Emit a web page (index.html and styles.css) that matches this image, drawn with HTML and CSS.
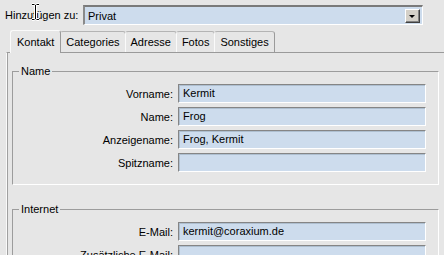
FILE: index.html
```html
<!DOCTYPE html>
<html lang="de">

<head>
    <meta charset="UTF-8">
    <title>Kontakt bearbeiten</title>
    <link rel="stylesheet" href="styles.css">
</head>

<body>
    <div class="topbar">
        <label class="top-label">Hinzufügen zu:</label>
        <div class="combo">
            <span class="combo-text">Privat</span>
            <span class="combo-btn"><span class="arrow"></span></span>
        </div>
    </div>

    <div class="tabs">
        <div class="tab active">Kontakt</div>
        <div class="tab">Categories</div>
        <div class="tab">Adresse</div>
        <div class="tab">Fotos</div>
        <div class="tab">Sonstiges</div>
    </div>

    <div class="pane">
        <fieldset class="group">
            <legend>Name</legend>
            <div class="row"><label>Vorname:</label><div class="field">Kermit</div></div>
            <div class="row"><label>Name:</label><div class="field">Frog</div></div>
            <div class="row"><label>Anzeigename:</label><div class="field">Frog, Kermit</div></div>
            <div class="row"><label>Spitzname:</label><div class="field"></div></div>
        </fieldset>

        <fieldset class="group">
            <legend>Internet</legend>
            <div class="row"><label>E-Mail:</label><div class="field">kermit@coraxium.de</div></div>
            <div class="row"><label>Zusätzliche E-Mail:</label><div class="field"></div></div>
        </fieldset>
    </div>

    <svg class="ibeam" width="9" height="18" viewBox="0 0 9 18">
        <path d="M1 1.5h2.5M5.5 1.5H8M4.5 2v14M1 16.5h2.5M5.5 16.5H8" stroke="#fff" stroke-width="3" fill="none"/>
        <path d="M1 1.5h2.5M5.5 1.5H8M4.5 2v14M1 16.5h2.5M5.5 16.5H8" stroke="#000" stroke-width="1" fill="none"/>
    </svg>
</body>

</html>
```

FILE: styles.css
```css
body {
    margin: 0;
    background: #e6e6e6;
    font-family: 'Liberation Sans', Arial, sans-serif;
    font-size: 11px;
    color: #000;
    overflow: hidden;
    position: relative;
}

.topbar {
    display: flex;
    align-items: center;
    padding: 5px 0 0 5px;
}

.top-label {
    width: 78px;
}

.combo {
    width: 337px;
    height: 15px;
    display: flex;
    align-items: center;
    justify-content: space-between;
    background: #cddced;
    border-top: 2px solid #7a7a7a;
    border-left: 2px solid #8a8a8a;
    border-bottom: 1px solid #fff;
    border-right: 1px solid #fff;
    padding: 1px 0;
}

.combo-text {
    padding-left: 3px;
}

.combo-btn {
    width: 13px;
    height: 12px;
    margin-right: 2px;
    background: #d4d0c8;
    border-top: 1px solid #fff;
    border-left: 1px solid #fff;
    border-right: 1px solid #404040;
    border-bottom: 1px solid #404040;
    box-shadow: inset -1px -1px 0 #808080;
    display: flex;
    align-items: center;
    justify-content: center;
}

.arrow {
    width: 0;
    height: 0;
    border-left: 3px solid transparent;
    border-right: 3px solid transparent;
    border-top: 3px solid #000;
    margin: 1px 1px 0 0;
}

.tabs {
    display: flex;
    align-items: flex-end;
    margin: 4px 0 0 10px;
    height: 23px;
}

.tab {
    height: 20px;
    line-height: 20px;
    padding: 0 5px;
    border-top: 1px solid #b4b4b4;
    border-right: 1px solid #9a9a9a;
    border-left: 1px solid #fafafa;
    border-radius: 3px 3px 0 0;
    margin-left: -1px;
}

.tab.active {
    height: 22px;
    line-height: 22px;
    margin-left: 0;
    padding: 0 6px;
    position: relative;
    z-index: 1;
    background: #e6e6e6;
    border-top-color: #fafafa;
    margin-bottom: -1px;
}

.pane {
    margin-left: 6px;
    width: 470px;
    border-top: 1px solid #9a9a9a;
    border-left: 1px solid #fafafa;
    box-shadow: inset 1px 0 0 #a0a0a0;
    padding: 12px 0 0 5px;
    height: 220px;
}

.group {
    width: 425px;
    margin: 0 0 18px 0;
    padding: 7px 0 8px 0;
    border-top: 1px solid #9c9c9c;
    border-left: 1px solid #9c9c9c;
    border-right: 1px solid #fff;
    border-bottom: 1px solid #fff;
}

.group legend {
    padding: 0 2px;
    margin-left: 6px;
}

.row {
    display: grid;
    grid-template-columns: 160px 248px;
    column-gap: 5px;
    align-items: center;
    margin-bottom: 4px;
}

.row label {
    text-align: right;
}

.field {
    height: 17px;
    line-height: 17px;
    padding-left: 4px;
    background: #cddced;
    border-top: 1px solid #858585;
    border-left: 1px solid #858585;
    border-bottom: 1px solid #fff;
    border-right: 1px solid #fff;
    box-shadow: inset 1px 1px 0 #aebfd0;
}

.ibeam {
    position: absolute;
    left: 31px;
    top: 3px;
}
```
